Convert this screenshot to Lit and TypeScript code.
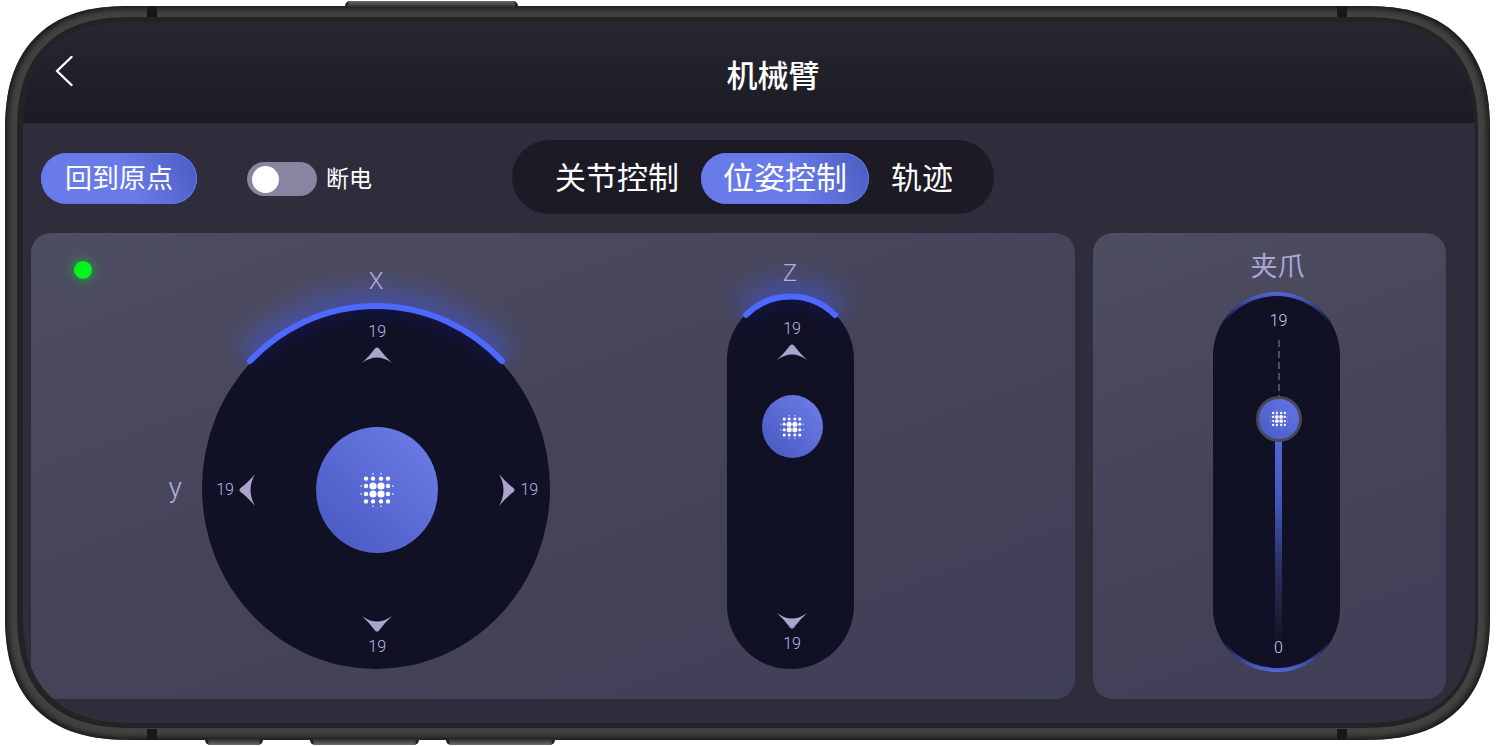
import { LitElement, html, svg, css } from "lit";
import { customElement, property, state } from "lit/decorators.js";
import { classMap } from "lit/directives/class-map.js";

type Direction = "up" | "down" | "left" | "right";

const ARROWS: Record<Direction, { w: number; h: number; d: string }> = {
  up: { w: 32, h: 16, d: "M1 16Q9 8.500 14 1.600Q16 -0.800 18 1.600Q23 8.500 31 16Q16 5 1 16Z" },
  down: { w: 32, h: 16, d: "M1 0Q9 7.500 14 14.400Q16 16.800 18 14.400Q23 7.500 31 0Q16 11 1 0Z" },
  left: { w: 16, h: 32, d: "M16 0Q8.500 9 1.600 14Q-0.800 16 1.600 18Q8.500 23 16 32Q7 16 16 0Z" },
  right: { w: 16, h: 32, d: "M0 0Q7.500 9 14.400 14Q16.800 16 14.400 18Q7.500 23 0 32Q9 16 0 0Z" },
};

/** Arrow with the reading for its direction next to it. */
@customElement("step-button")
export class StepButton extends LitElement {
  @property() direction: Direction = "up";
  @property({ type: Number }) value = 0;

  static styles = css`
    :host {
      display: block;
    }
    .step {
      display: flex;
      align-items: center;
      gap: 5px;
      padding: 0;
      border: 0;
      background: none;
      color: #bdb9e6;
      font: 300 16px/20px Roboto, sans-serif;
      cursor: pointer;
    }
    .up {
      flex-direction: column;
    }
    .down {
      flex-direction: column-reverse;
    }
    .right {
      flex-direction: row-reverse;
    }
    .arrow {
      display: block;
      fill: #a9a5cf;
    }
  `;

  render() {
    const a = ARROWS[this.direction];
    return html`<button class="step ${this.direction}" aria-label=${this.direction}>
      <span>${this.value}</span>
      <svg class="arrow" width=${a.w} height=${a.h} viewBox="0 0 ${a.w} ${a.h}">
        <path d=${a.d} />
      </svg>
    </button>`;
  }
}

/** Cluster of dots shown on every handle. */
@customElement("grip-dots")
export class GripDots extends LitElement {
  @property({ type: Number }) size = 34;

  static styles = css`
    :host {
      display: block;
    }
    .dots {
      display: block;
      fill: #fff;
    }
  `;

  render() {
    const dots: [number, number, number][] = [];
    for (const sx of [-1, 1]) {
      for (const sy of [-1, 1]) {
        dots.push([4 * sx, 4 * sy, 3.6]);
        dots.push([11 * sx, 4 * sy, 2.2], [4 * sx, 11.4 * sy, 2.2], [11 * sx, 11.4 * sy, 2.2]);
        dots.push([15.8 * sx, 4 * sy, 0.8], [4 * sx, 16.2 * sy, 0.8]);
      }
    }
    return html`<svg class="dots" width=${this.size} height=${this.size} viewBox="-17 -17 34 34">
      ${dots.map(([x, y, r]) => svg`<circle cx=${x} cy=${y} r=${r} />`)}
    </svg>`;
  }
}

@customElement("app-root")
export class AppRoot extends LitElement {
  @state() private tab = "位姿控制";
  @state() private grip = 14;

  private readonly tabs = ["关节控制", "位姿控制", "轨迹"];
  private readonly gripMax = 19;

  static styles = css`
    :host {
      display: block;
      font-family: Roboto, "Noto Sans CJK SC", sans-serif;
      color: #fff;
    }
    * {
      box-sizing: border-box;
    }
    button {
      border: 0;
      font-family: inherit;
      color: inherit;
      cursor: pointer;
    }

    /* device frame */
    .stage {
      padding: 6px 8px 6px 5px;
      background: #fff;
    }
    .phone {
      position: relative;
      padding: 11px 12px 12px;
      border-radius: 106px;
      background: #424242;
      box-shadow: inset 0 0 5px 3px #1c1c1c;
    }
    .side {
      position: absolute;
      height: 6px;
      background: linear-gradient(#6a6a6a, #2c2c2c);
      border-radius: 5px 5px 0 0;
      border-left: 3px solid #222;
      border-right: 3px solid #222;
    }
    .power {
      left: 340px;
      top: -5px;
      width: 173px;
    }
    .mute,
    .louder,
    .quieter {
      bottom: -5px;
      border-radius: 0 0 5px 5px;
      background: linear-gradient(#2c2c2c, #6a6a6a);
    }
    .mute {
      left: 200px;
      width: 58px;
    }
    .louder {
      left: 305px;
      width: 109px;
    }
    .quieter {
      left: 441px;
      width: 109px;
    }
    .seam {
      position: absolute;
      width: 10px;
      height: 11px;
      background: #181818;
    }
    .start {
      left: 142px;
    }
    .end {
      right: 143px;
    }
    .top {
      top: 0;
    }
    .bottom {
      bottom: 0;
    }
    .bezel {
      padding: 5px 3px 5px 6px;
      border-radius: 95px;
      background: #232323;
    }
    .screen {
      overflow: hidden;
      border-radius: 91px;
      background: #2f2d3b;
    }
    @supports (corner-shape: superellipse(1.3)) {
      .phone,
      .bezel,
      .screen {
        corner-shape: superellipse(1.3);
      }
      .phone {
        border-radius: 126px;
      }
      .bezel {
        border-radius: 115px;
      }
      .screen {
        border-radius: 110px;
      }
    }

    /* header */
    .header {
      display: flex;
      align-items: center;
      height: 101px;
      background: linear-gradient(#272731, #1b1b24);
    }
    .back {
      display: block;
      padding: 0 0 4px 32px;
      background: none;
    }
    .chevron {
      display: block;
      fill: none;
      stroke: #fff;
      stroke-width: 2.4;
      stroke-linecap: round;
      stroke-linejoin: round;
    }
    .title {
      flex: 1;
      margin: 0;
      padding: 8px 2px 0 0;
      text-align: center;
      font-size: 31px;
      line-height: 40px;
      font-weight: 500;
    }

    /* toolbar */
    .toolbar {
      display: grid;
      grid-template-columns: 1fr auto 1fr;
      align-items: center;
      padding: 17px 10px 19px 18px;
    }
    .leading {
      display: flex;
      align-items: center;
      gap: 50px;
      padding-top: 2px;
    }
    .home {
      height: 51px;
      padding: 2px 24px 0;
      border-radius: 26px;
      font-size: 27px;
      line-height: 40px;
    }
    .accent {
      background: linear-gradient(65deg, #697be8 55%, #4a5bc0 100%);
      box-shadow: inset 0 0 0 1px #6474e4;
    }
    .power-field {
      display: flex;
      align-items: center;
      gap: 9px;
      padding-top: 2px;
      font-size: 23px;
      line-height: 34px;
    }
    .power-text {
      padding-top: 2px;
    }
    .toggle {
      appearance: none;
      display: flex;
      align-items: center;
      width: 70px;
      height: 34px;
      margin: 0;
      padding: 0 5px;
      border-radius: 17px;
      background: #8785a0;
      cursor: pointer;
    }
    .toggle::before {
      content: "";
      width: 27px;
      height: 27px;
      border-radius: 50%;
      background: #fff;
    }
    .toggle:checked {
      justify-content: flex-end;
      background: #697be8;
    }
    .tabs {
      display: flex;
      padding: 13px 19px 10px 21px;
      border-radius: 37px;
      background: #1c1b25;
    }
    .tab {
      height: 51px;
      padding: 0 22px;
      border-radius: 26px;
      background: none;
      font-size: 31px;
      line-height: 46px;
    }
    .tab.accent {
      background: linear-gradient(65deg, #697be8 55%, #4a5bc0 100%);
    }

    /* panels */
    .panels {
      display: grid;
      grid-template-columns: 1044fr 353fr;
      gap: 18px;
      padding: 0 29px 24px 8px;
    }
    .panel {
      border-radius: 20px;
      background: linear-gradient(160deg, #4e4e62, #444359 50%, #403f58);
    }
    .pose {
      display: grid;
      grid-template-columns: 18px 72fr auto 176fr auto 221fr;
      align-items: end;
      padding: 28px 0 30px 43px;
    }
    .status {
      align-self: start;
      width: 18px;
      height: 18px;
      border-radius: 50%;
      background: #00f51d;
      box-shadow: 0 0 10px 2px #00f51d66;
    }
    .plane {
      grid-column: 3;
      display: grid;
      grid-template-columns: 22px 348px;
      column-gap: 16px;
      row-gap: 10px;
    }
    .axis {
      z-index: 1;
      color: #b2aee0;
      font-size: 24px;
      font-weight: 300;
      line-height: 24px;
      text-align: center;
    }
    .axis-x {
      grid-column: 2;
    }
    .axis-y {
      align-self: center;
      padding-top: 4px;
      font-size: 28px;
    }
    .dial {
      display: grid;
      height: 366px;
    }
    .shape {
      grid-area: 1 / 1;
      display: block;
      overflow: visible;
    }
    .well {
      fill: #101125;
    }
    .arc {
      fill: none;
      stroke: #4d69ff;
      stroke-width: 6;
      stroke-linecap: round;
    }
    .halo {
      fill: none;
      stroke: #4d69ff;
      stroke-width: 40;
      opacity: 0.3;
      filter: blur(12px);
    }
    .sheen {
      fill: none;
      stroke: #2a35ff;
      stroke-width: 20;
      opacity: 0.12;
      filter: blur(8px);
    }
    .pad {
      grid-area: 1 / 1;
      z-index: 1;
      display: grid;
      grid-template:
        ". up ." auto
        "left knob right" 1fr
        ". down ." auto / auto 1fr auto;
      place-items: center;
      padding: 19px 12px 12px 14px;
    }
    .up {
      grid-area: up;
    }
    .down {
      grid-area: down;
    }
    .left {
      grid-area: left;
    }
    .right {
      grid-area: right;
    }
    .knob {
      grid-area: knob;
      display: grid;
      place-items: center;
      width: 122px;
      height: 126px;
      padding: 0;
      border-radius: 50%;
      background: linear-gradient(45deg, #4a5bc4 10%, #6a7be6 90%);
    }
    .lift {
      grid-column: 5;
      display: grid;
      grid-template-columns: 127px;
      row-gap: 8px;
    }
    .rail {
      display: grid;
      height: 376px;
    }
    .stack {
      grid-area: 1 / 1;
      z-index: 1;
      display: flex;
      flex-direction: column;
      align-items: center;
      padding: 26px 0 15px 4px;
    }
    .small {
      width: 61px;
      height: 63px;
      margin: 35px 0 auto;
    }

    /* gripper */
    .gripper {
      display: flex;
      flex-direction: column;
      align-items: center;
      gap: 9px;
      padding: 18px 0 27px 14px;
    }
    .caption {
      padding-left: 2px;
      color: #aaa5d6;
      font-size: 27px;
      line-height: 32px;
    }
    .capsule {
      display: grid;
      width: 127px;
      height: 380px;
    }
    .scale {
      grid-area: 1 / 1;
      z-index: 1;
      display: flex;
      flex-direction: column;
      align-items: center;
      padding: 19px 0 14px 4px;
      color: #cfccf2;
      font-size: 16px;
      font-weight: 300;
      line-height: 20px;
    }
    .slider {
      flex: 1;
      display: grid;
      margin: 9px 0 -2px;
      grid-template-columns: 46px;
      grid-template-rows: minmax(0, 1fr);
    }
    .travel {
      grid-area: 1 / 1;
      display: flex;
      flex-direction: column;
      align-items: center;
    }
    .rest {
      width: 2px;
      background: repeating-linear-gradient(#4d4c5f 0 7px, transparent 7px 11px);
    }
    .thumb {
      z-index: 1;
      flex: none;
      display: grid;
      place-items: center;
      width: 46px;
      height: 46px;
      margin: -23px 0;
      border: 3px solid #49485a;
      border-radius: 50%;
      background: linear-gradient(45deg, #4a5bc4, #6076e6);
    }
    .filled {
      flex: 1;
      width: 7px;
      background: linear-gradient(#566ae0, #4759bd 35%, #2b3268 65%, #17151f);
    }
    .range {
      grid-area: 1 / 1;
      z-index: 2;
      width: 46px;
      height: 100%;
      margin: 0;
      opacity: 0;
      writing-mode: vertical-lr;
      direction: rtl;
      cursor: pointer;
    }
  `;

  private renderFrameDetails() {
    return html`
      <span class="side power"></span>
      <span class="side mute"></span>
      <span class="side louder"></span>
      <span class="side quieter"></span>
      <span class="seam start top"></span>
      <span class="seam end top"></span>
      <span class="seam start bottom"></span>
      <span class="seam end bottom"></span>
    `;
  }

  private renderToolbar() {
    return html`<div class="toolbar">
      <div class="leading">
        <button class="home accent">回到原点</button>
        <label class="power-field">
          <input class="toggle" type="checkbox" role="switch" />
          <span class="power-text">断电</span>
        </label>
      </div>
      <div class="tabs" role="tablist">
        ${this.tabs.map(
          (name) => html`<button
            role="tab"
            aria-selected=${name === this.tab}
            class=${classMap({ tab: true, accent: name === this.tab })}
            @click=${() => (this.tab = name)}
          >${name}</button>`
        )}
      </div>
    </div>`;
  }

  private renderPlane() {
    const arc = "M48 58A176 182 0 0 1 300 58";
    return html`<div class="plane">
      <span class="axis axis-x">X</span>
      <span class="axis axis-y">y</span>
      <div class="dial">
        <svg class="shape" width="348" height="366" viewBox="0 0 348 366">
          <path class="halo" d=${arc} />
          <ellipse class="well" cx="174" cy="185" rx="174" ry="181" />
          <path class="sheen" d=${arc} />
          <path class="arc" d=${arc} />
        </svg>
        <div class="pad">
          <step-button class="up" direction="up" .value=${19}></step-button>
          <step-button class="left" direction="left" .value=${19}></step-button>
          <button class="knob" aria-label="X y"><grip-dots .size=${34}></grip-dots></button>
          <step-button class="right" direction="right" .value=${19}></step-button>
          <step-button class="down" direction="down" .value=${19}></step-button>
        </div>
      </div>
    </div>`;
  }

  private renderLift() {
    const arc = "M19 22A63 63 0 0 1 108 22";
    return html`<div class="lift">
      <span class="axis">Z</span>
      <div class="rail">
        <svg class="shape" width="127" height="376" viewBox="0 0 127 376">
          <path class="halo" d=${arc} />
          <rect class="well" y="3" width="127" height="373" rx="63.5" />
          <path class="sheen" d=${arc} />
          <path class="arc" d=${arc} />
        </svg>
        <div class="stack">
          <step-button direction="up" .value=${19}></step-button>
          <button class="knob small" aria-label="Z"><grip-dots .size=${24}></grip-dots></button>
          <step-button direction="down" .value=${19}></step-button>
        </div>
      </div>
    </div>`;
  }

  private renderGripper() {
    const rest = (1 - this.grip / this.gripMax) * 100;
    return html`<section class="panel gripper">
      <label class="caption" for="grip">夹爪</label>
      <div class="capsule">
        <svg class="shape" width="127" height="380" viewBox="0 0 127 380">
          <defs>
            <linearGradient id="rim" x1="0" y1="0" x2="0" y2="1">
              <stop offset="0" stop-color="#5369dc" />
              <stop offset="0.080" stop-color="#101125" />
              <stop offset="0.920" stop-color="#101125" />
              <stop offset="1" stop-color="#5369dc" />
            </linearGradient>
          </defs>
          <rect fill="url(#rim)" width="127" height="380" rx="63.5" />
          <rect class="well" y="4" width="127" height="372" rx="63.5" />
        </svg>
        <div class="scale">
          <span>${this.gripMax}</span>
          <div class="slider">
            <div class="travel">
              <span class="rest" style="height:${rest}%"></span>
              <span class="thumb"><grip-dots .size=${18}></grip-dots></span>
              <span class="filled"></span>
            </div>
            <input
              id="grip"
              class="range"
              type="range"
              min="0"
              max=${this.gripMax}
              .value=${String(this.grip)}
              @input=${(e: Event) => (this.grip = Number((e.target as HTMLInputElement).value))}
            />
          </div>
          <span>0</span>
        </div>
      </div>
    </section>`;
  }

  render() {
    return html`<div class="stage">
      <div class="phone">
        ${this.renderFrameDetails()}
        <div class="bezel">
          <main class="screen">
            <header class="header">
              <button class="back" aria-label="返回">
                <svg class="chevron" width="18" height="32" viewBox="0 0 18 32">
                  <path d="M16.500 2L2 16L16.500 30" />
                </svg>
              </button>
              <h1 class="title">机械臂</h1>
            </header>
            ${this.renderToolbar()}
            <div class="panels">
              <section class="panel pose">
                <span class="status"></span>
                ${this.renderPlane()} ${this.renderLift()}
              </section>
              ${this.renderGripper()}
            </div>
          </main>
        </div>
      </div>
    </div>`;
  }
}
